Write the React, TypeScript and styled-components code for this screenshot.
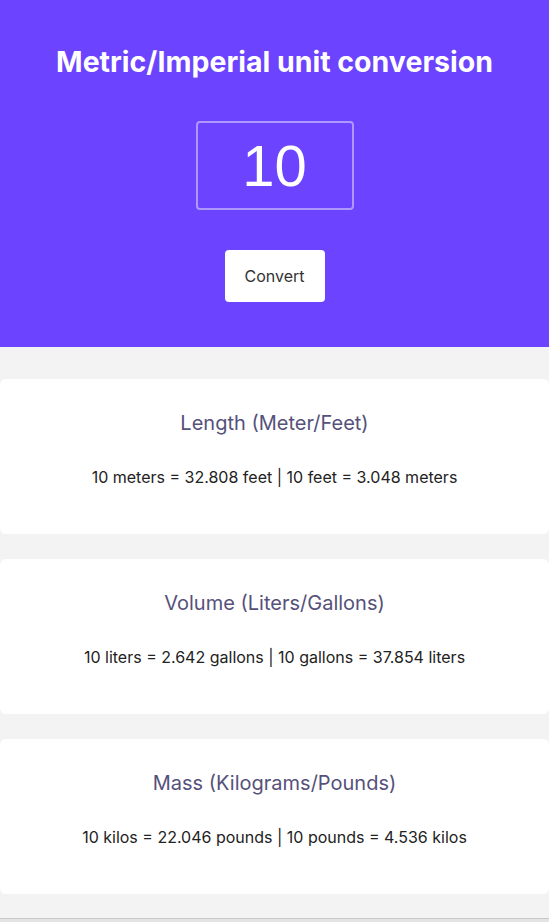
import React from "react";
import styled, { createGlobalStyle } from "styled-components";

const Global = createGlobalStyle`
  html, body { margin: 0; padding: 0; background: #f3f3f3; }
  body { font-family: Inter, "Noto Sans", sans-serif; }
  * { box-sizing: border-box; }
`;

const Page = styled.div`
  display: flex;
  flex-direction: column;
  min-height: 922px;
`;

const Header = styled.header`
  background: #6c43ff;
  height: 347px;
  display: flex;
  flex-direction: column;
  align-items: center;
  padding-top: 44px;
`;

const Title = styled.h1`
  margin: 0;
  color: #ffffff;
  font-family: Inter, sans-serif;
  font-weight: 700;
  font-size: 28.5px;
  line-height: 36px;
  letter-spacing: 0;
`;

const NumberInput = styled.input`
  margin-top: 41px;
  width: 158px;
  height: 89px;
  border: 2px solid rgba(255, 255, 255, 0.45);
  border-radius: 4px;
  background: transparent;
  color: #ffffff;
  text-align: center;
  font-family: "Liberation Sans", Arial, sans-serif;
  font-size: 58px;
  outline: none;
  padding: 0;
`;

const ConvertButton = styled.button`
  margin-top: 40px;
  width: 100px;
  height: 52px;
  border: none;
  border-radius: 4px;
  background: #ffffff;
  color: #333333;
  font-family: Inter, sans-serif;
  font-size: 16px;
  cursor: pointer;
`;

const Cards = styled.main`
  display: flex;
  flex-direction: column;
  gap: 25px;
  padding: 32px 0 24px;
  flex: 1;
`;

const Card = styled.section`
  background: #ffffff;
  border-radius: 6px;
  height: 155px;
  display: flex;
  flex-direction: column;
  align-items: center;
  padding-top: 31px;
`;

const CardTitle = styled.h2`
  margin: 0;
  color: #55517a;
  font-family: Inter, sans-serif;
  font-weight: 400;
  font-size: 20px;
  line-height: 26px;
`;

const Result = styled.p`
  margin: 30px 0 0;
  color: #222222;
  font-family: Inter, sans-serif;
  font-size: 16px;
  line-height: 22px;
`;

const BottomBar = styled.div`
  height: 4px;
  border-top: 1px solid #c8c8c8;
  background: #e4e4e4;
`;

const data = [
  {
    title: "Length (Meter/Feet)",
    text: "10 meters = 32.808 feet | 10 feet = 3.048 meters",
  },
  {
    title: "Volume (Liters/Gallons)",
    text: "10 liters = 2.642 gallons | 10 gallons = 37.854 liters",
  },
  {
    title: "Mass (Kilograms/Pounds)",
    text: "10 kilos = 22.046 pounds | 10 pounds = 4.536 kilos",
  },
];

export default function App() {
  return (
    <Page>
      <Global />
      <Header>
        <Title>Metric/Imperial unit conversion</Title>
        <NumberInput type="text" defaultValue="10" />
        <ConvertButton>Convert</ConvertButton>
      </Header>
      <Cards>
        {data.map((d) => (
          <Card key={d.title}>
            <CardTitle>{d.title}</CardTitle>
            <Result>{d.text}</Result>
          </Card>
        ))}
      </Cards>
      <BottomBar />
    </Page>
  );
}
